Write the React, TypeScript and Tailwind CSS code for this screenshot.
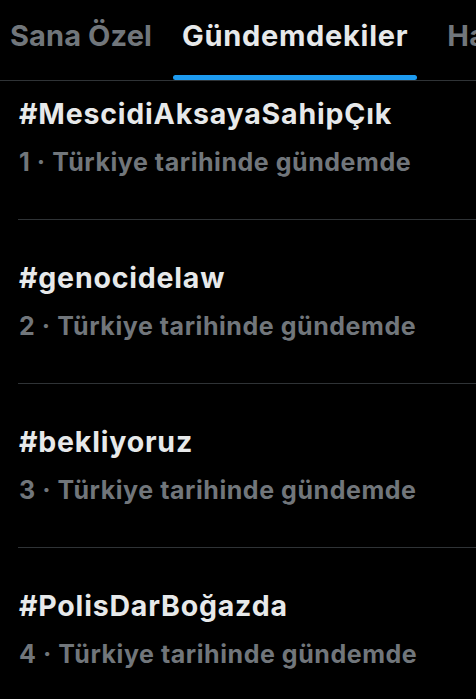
const trends = [
  { rank: 1, tag: "#MescidiAksayaSahipÇık" },
  { rank: 2, tag: "#genocidelaw" },
  { rank: 3, tag: "#bekliyoruz" },
  { rank: 4, tag: "#PolisDarBoğazda" },
];

export default function App() {
  return (
    <div
      className="h-[699px] w-[476px] overflow-hidden bg-black"
      style={{ fontFamily: "Inter, 'Noto Sans', sans-serif" }}
    >
      <div className="flex h-[81px] items-stretch overflow-hidden whitespace-nowrap border-b border-[#2f3336] pl-[10px]">
        <div className="flex items-center pb-[8px] text-[29px] font-bold tracking-[0.1px] text-[#71767b]">
          Sana Özel
        </div>
        <div className="relative ml-[21px] flex items-center px-[9px] pb-[8px] text-[29px] font-bold tracking-[0.7px] text-[#e7e9ea]">
          Gündemdekiler
          <span className="absolute bottom-0 left-0 right-0 h-[5px] rounded-full bg-[#1d9bf0]" />
        </div>
        <div className="ml-[30px] flex items-center pb-[8px] text-[29px] font-bold tracking-[0.4px] text-[#71767b]">
          Haberler
        </div>
      </div>

      {trends.map((t, i) => (
        <div
          key={t.rank}
          className={`ml-[18px] border-b border-[#2f3336] pb-[42px] pl-px ${
            i === 0 ? "pt-[16px]" : "pt-[41px]"
          }`}
        >
          <div className="text-[28.5px] font-bold leading-[34px] tracking-[0.8px] text-[#e7e9ea]">
            {t.tag}
          </div>
          <div className="mt-[16px] text-[25px] font-bold leading-[30px] tracking-[0.55px] text-[#71767b]">
            {t.rank} · Türkiye tarihinde gündemde
          </div>
        </div>
      ))}
    </div>
  );
}
